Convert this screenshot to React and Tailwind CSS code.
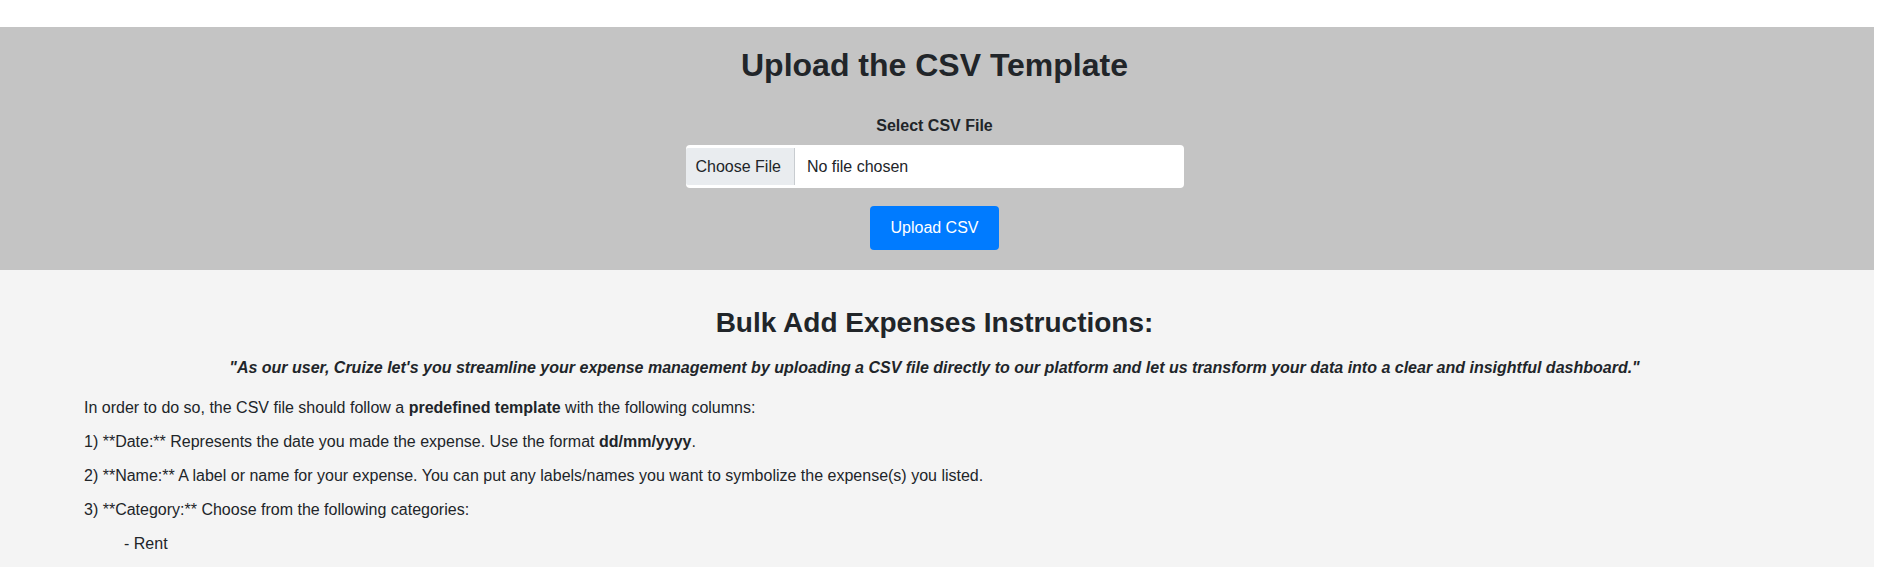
import React from "react";

const App = () => {
  return (
    <div className="w-[1874px] min-h-screen bg-white font-['Liberation_Sans',Arial,sans-serif] text-[#212529]">
      {/* top spacer */}
      <div className="h-[27px] bg-white" />

      {/* Upload band */}
      <section className="h-[243px] bg-[#c4c4c4] pr-[5px] flex flex-col items-center">
        <h2 className="mt-[19px] text-[32px] leading-[1.2] font-bold">Upload the CSV Template</h2>
        <label className="mt-[30px] text-base leading-6 font-bold">Select CSV File</label>
        <div className="mt-[7px] h-[43px] w-[498px] bg-white rounded-[4px] flex items-center">
          <span className="h-[37px] flex items-center pl-[10px] pr-[13px] bg-[#e9ecef] border-r border-[#c8ccd0] text-base rounded-l-[2px]">
            Choose File
          </span>
          <span className="pl-[12px] text-base">No file chosen</span>
        </div>
        <button className="mt-[18px] h-[44px] w-[129px] bg-[#007bff] text-white text-base rounded-[4px]">
          Upload CSV
        </button>
      </section>

      {/* Instructions */}
      <section className="bg-[#f4f4f4] pb-10">
        <div className="pr-[5px] flex flex-col items-center">
          <h3 className="mt-[36px] text-[28px] leading-[1.2] font-bold">Bulk Add Expenses Instructions:</h3>
          <p className="mt-[16px] text-base leading-6 font-bold italic">
            "As our user, Cruize let's you streamline your expense management by uploading a CSV file directly to our platform and let us transform your data into a clear and insightful dashboard."
          </p>
        </div>
        <div className="pl-[84px] mt-[16px] text-base leading-6">
          <p className="mb-[10px]">
            In order to do so, the CSV file should follow a <b>predefined template</b> with the following columns:
          </p>
          <p className="mb-[10px]">
            1) **Date:** Represents the date you made the expense. Use the format <b>dd/mm/yyyy</b>.
          </p>
          <p className="mb-[10px]">
            2) **Name:** A label or name for your expense. You can put any labels/names you want to symbolize the expense(s) you listed.
          </p>
          <p className="mb-[10px]">3) **Category:** Choose from the following categories:</p>
          <p className="mb-[10px] pl-10">- Rent</p>
        </div>
      </section>
    </div>
  );
};

export default App;
